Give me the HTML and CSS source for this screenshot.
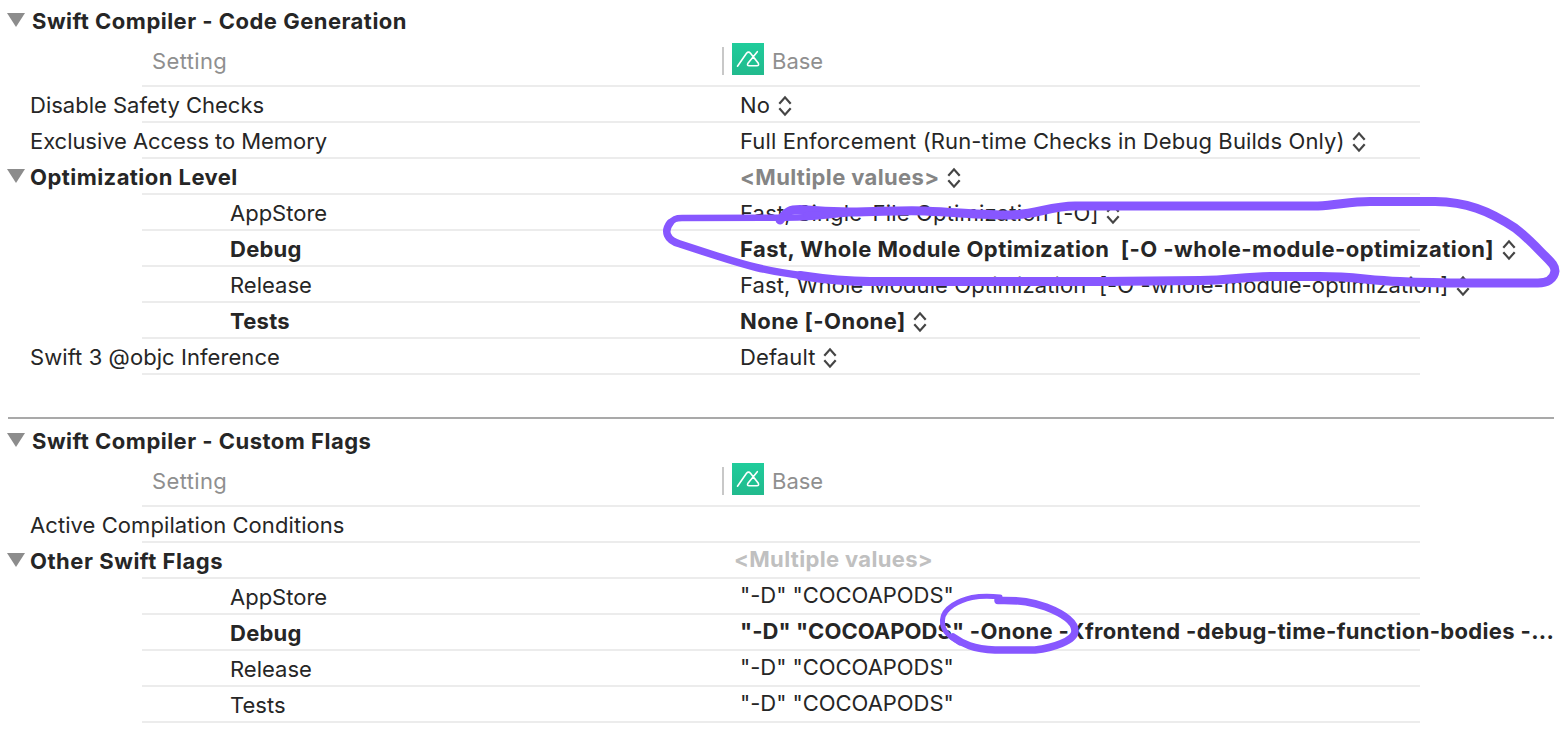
FILE: index.html
```
<!DOCTYPE html>
<html lang="en">
<head>
<meta charset="utf-8">
<title>Build Settings</title>
<link rel="stylesheet" href="styles.css">
</head>
<body>
<svg class="defs" width="0" height="0">
  <defs>
    <linearGradient id="green" x1="0" y1="0" x2="0" y2="1"><stop offset="0" stop-color="#20cc9b"/><stop offset="1" stop-color="#21ba8d"/></linearGradient>
    <symbol id="step" viewBox="0 0 14 22"><path d="M1.300 8.800 7 2.300l5.700 6.500M1.300 13.200 7 19.700l5.700-6.500" fill="none" stroke="#454545" stroke-width="2.200"/></symbol>
    <symbol id="tri" viewBox="0 0 18 14"><path d="M0 0H18L9 14Z" fill="#8c8c8c"/></symbol>
    <symbol id="logo" viewBox="0 0 32 32"><rect width="32" height="32" fill="url(#green)"/><path d="M5.500 23.200 14.500 10.300Q16.500 7.900 18.500 10.300L26.300 20.200Q27.300 22.700 24.900 22.700H17.200Q14.600 22.700 16 20.200L25.300 8.700" fill="none" stroke="#fff" stroke-width="1.600" stroke-linecap="round"/></symbol>
  </defs>
</svg>
<main class="settings">
  <section class="group">
    <h2 class="title"><svg class="tri"><use href="#tri"/></svg><span>Swift Compiler - Code Generation</span></h2>
    <div class="head"><span class="head-name">Setting</span><svg class="logo"><use href="#logo"/></svg><span>Base</span></div>
    <div class="row"><span class="name">Disable Safety Checks</span><span class="value">No</span><svg class="step"><use href="#step"/></svg></div>
    <div class="row"><span class="name snug">Exclusive Access to Memory</span><span class="value">Full Enforcement (Run-time Checks in Debug Builds Only)</span><svg class="step"><use href="#step"/></svg></div>
    <div class="row bold"><span class="name"><svg class="tri"><use href="#tri"/></svg>Optimization Level</span><span class="value mixed">&lt;Multiple values&gt;</span><svg class="step"><use href="#step"/></svg></div>
    <div class="row"><span class="name child">AppStore</span><span class="value wide">Fast, Single-File Optimization [-O]</span><svg class="step"><use href="#step"/></svg></div>
    <div class="row bold"><span class="name child">Debug</span><span class="value">Fast, Whole Module Optimization  [-O -whole-module-optimization]</span><svg class="step"><use href="#step"/></svg></div>
    <div class="row"><span class="name child">Release</span><span class="value">Fast, Whole Module Optimization  [-O -whole-module-optimization]</span><svg class="step"><use href="#step"/></svg></div>
    <div class="row bold"><span class="name child">Tests</span><span class="value">None [-Onone]</span><svg class="step"><use href="#step"/></svg></div>
    <div class="row"><span class="name loose">Swift 3 @objc Inference</span><span class="value">Default</span><svg class="step"><use href="#step"/></svg></div>
  </section>
  <hr class="divider">
  <section class="group flags">
    <h2 class="title"><svg class="tri"><use href="#tri"/></svg><span>Swift Compiler - Custom Flags</span></h2>
    <div class="head"><span class="head-name">Setting</span><svg class="logo"><use href="#logo"/></svg><span>Base</span></div>
    <div class="row"><span class="name loose">Active Compilation Conditions</span></div>
    <div class="row bold"><span class="name"><svg class="tri"><use href="#tri"/></svg>Other Swift Flags</span><span class="value placeholder">&lt;Multiple values&gt;</span></div>
    <div class="row"><span class="name child">AppStore</span><span class="value">"-D" "COCOAPODS"</span></div>
    <div class="row bold"><span class="name child">Debug</span><span class="value"><span class="pods">"-D" "COCOAPODS"</span> -Onone -Xfrontend -debug-time-function-bodies -...</span></div>
    <div class="row"><span class="name child">Release</span><span class="value">"-D" "COCOAPODS"</span></div>
    <div class="row"><span class="name child">Tests</span><span class="value">"-D" "COCOAPODS"</span></div>
  </section>
</main>
<svg class="marks" viewBox="0 0 1562 753">
  <path class="ink" stroke-width="9" d="M780 220C787 211 790 209.500 800 209.500C815 211 830 212 850 212C880 212 900 210 925 211C965 213 985 215 1010 215C1035 215 1050 206 1075 206H1318C1338 205 1350 201.500 1370 201.500H1435C1466 202 1488 210 1515 228C1528 238 1536 247 1546 257C1552 263 1555 266 1555 271C1554 279 1547 283 1538 283H1470C1440 283 1420 282.500 1400 281.500C1365 280 1355 276.500 1320 276.500H1270C1240 277 1230 280.500 1200 280.500L1100 281.500H870C850 281.500 830 280 800 275.500"/>
  <path class="ink" stroke-width="7.500" d="M805 276C765 271 745 265 717 256L680 244C666 240 664 231 670 223"/>
  <path class="ink" stroke-width="6.500" d="M669.500 224C673 219 676 218 682 218L783 217.700C800 217.700 825 216 845 213.500"/>
  <path class="ink" stroke-width="6" d="M806 215L850 213"/>
  <path class="ink" stroke-width="7.500" d="M998 600.500C1022 600 1032 602 1046 607C1064 614 1075 622 1075 631C1075 641 1052 648 1035 650H995C973 649 963 644 953 637"/>
  <path class="ink" stroke-width="5" d="M960 643C946 635 942 629 942.500 620C943 608 960 600 972 597.500C983 595.500 990 596 1000 597"/>
</svg>
</body>
</html>
```
FILE: styles.css
```
body { margin: 0; background: #fff; color: #262626; font: 22px/36px Inter, "Liberation Sans", sans-serif; overflow: hidden; }
.defs { position: absolute; }
.settings { width: 1562px; height: 753px; overflow: hidden; }
.title { display: flex; align-items: center; gap: 7px; height: 42px; margin: 0; padding-left: 7px; font-size: 22px; font-weight: 700; letter-spacing: 0.48px; }
.tri { width: 18px; height: 14px; flex: none; }
.head { display: flex; align-items: flex-start; height: 45px; color: #8f8f8f; background: linear-gradient(#ececec, #ececec) 142px 100% / 1278px 2px no-repeat; }
.head > span { line-height: 38px; }
.head-name { box-sizing: border-box; width: 724px; padding-left: 152px; letter-spacing: 0.35px; background: linear-gradient(#c8c8c8, #c8c8c8) 722px 5px / 2px 28px no-repeat; }
.logo { width: 32px; height: 32px; margin: 1px 8px 0; }
.row { display: flex; align-items: center; height: 36px; white-space: pre; background: linear-gradient(#ececec, #ececec) 142px 100% / 1278px 2px no-repeat; }
.name { display: flex; align-items: center; box-sizing: border-box; width: 740px; padding-left: 30px; flex: none; }
.name .tri { margin: 0 5px 0 -23px; position: relative; top: -1px; }
.title .tri { position: relative; top: -1px; }
.snug { letter-spacing: -0.06px; }
.loose { letter-spacing: 0.07px; }
.child { padding-left: 230px; }
.value { letter-spacing: 0.11px; }
.wide { letter-spacing: 0.17px; }
.bold { font-weight: 700; }
.bold .name { letter-spacing: 0.45px; }
.flags .bold .name { letter-spacing: 0.53px; }
.bold .child, .flags .bold .child { letter-spacing: 0.25px; }
.bold .value { letter-spacing: 0.46px; }
.bold .mixed { color: #858585; letter-spacing: 0.36px; }
.bold .placeholder { color: #c0c0c0; margin-left: -6px; letter-spacing: 0.32px; }
.step { width: 14px; height: 22px; margin: 2px 0 0 7.600px; flex: none; }
.flags .value { padding-bottom: 4px; letter-spacing: -0.03px; }
.flags .bold .value { letter-spacing: 0.34px; }
.flags .bold .pods { letter-spacing: 0.05px; }
.divider { height: 2px; margin: 42px 8px 1px; border: 0; background: #a9a9a9; }
.marks { position: absolute; left: 0; top: 0; width: 1562px; height: 753px; }
.ink { fill: none; stroke: #8757ff; stroke-linecap: round; stroke-linejoin: round; }
```
